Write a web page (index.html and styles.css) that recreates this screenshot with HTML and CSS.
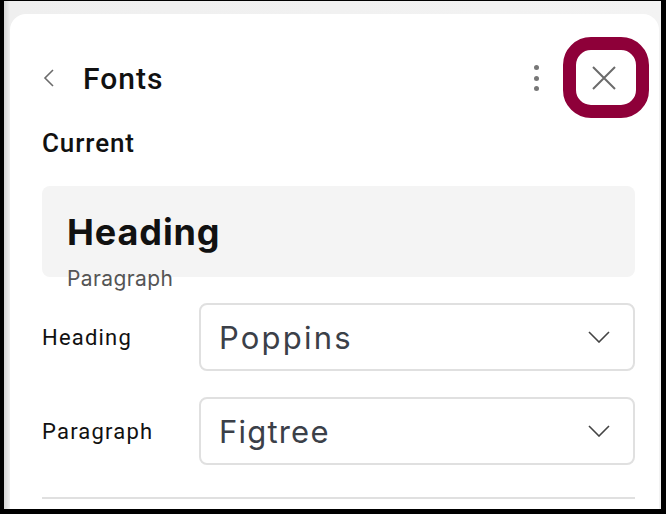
FILE: index.html
```html
<!DOCTYPE html>
<html>
<head>
<meta charset="utf-8">
<link rel="stylesheet" href="styles.css">
</head>
<body>
<div class="frame">
  <div class="panel">
    <div class="header">
      <button class="back" aria-label="Back">
        <svg width="14" height="20" viewBox="0 0 14 20"><path d="M11 2 L3 10 L11 18" fill="none" stroke="#6b6b6b" stroke-width="1.6"/></svg>
      </button>
      <h1 class="title">Fonts</h1>
      <div class="spacer"></div>
      <button class="dots" aria-label="More">
        <span></span><span></span><span></span>
      </button>
      <button class="close" aria-label="Close">
        <svg width="26" height="26" viewBox="0 0 26 26"><path d="M2 2 L24 24 M24 2 L2 24" fill="none" stroke="#6b6b6b" stroke-width="2"/></svg>
        <span class="ring"></span>
      </button>
    </div>
    <h2 class="section">Current</h2>
    <div class="preview">
      <div class="preview-heading">Heading</div>
      <div class="preview-para">Paragraph</div>
    </div>
    <div class="row">
      <label class="row-label">Heading</label>
      <div class="select">
        <span class="select-value">Poppins</span>
        <svg width="22" height="12" viewBox="0 0 22 12"><path d="M1 1 L11 11 L21 1" fill="none" stroke="#444" stroke-width="1.6"/></svg>
      </div>
    </div>
    <div class="row">
      <label class="row-label">Paragraph</label>
      <div class="select">
        <span class="select-value fig">Figtree</span>
        <svg width="22" height="12" viewBox="0 0 22 12"><path d="M1 1 L11 11 L21 1" fill="none" stroke="#444" stroke-width="1.6"/></svg>
      </div>
    </div>
    <div class="divider"></div>
  </div>
</div>
</body>
</html>
```
FILE: styles.css
```css
html, body {
  margin: 0;
  padding: 0;
  background: #000;
  height: 514px;
  overflow: hidden;
}
.frame {
  margin: 1px 5px 0 4px;
  height: 508px;
  background: linear-gradient(to right, #d4d4d4 0px, #efefef 6px, #f3f3f3 100%);
  overflow: hidden;
  padding-top: 13px;
  padding-left: 6px;
  padding-right: 2px;
  box-sizing: border-box;
}
.panel {
  background: #fff;
  border-radius: 16px 16px 0 0;
  height: 495px;
  padding: 40px 24px 0 32px;
  box-sizing: border-box;
  font-family: Roboto, "Liberation Sans", sans-serif;
  color: #111;
}
.header {
  display: flex;
  align-items: center;
  height: 48px;
}
button {
  background: none;
  border: 0;
  padding: 0;
  cursor: pointer;
}
.back {
  width: 14px;
  height: 20px;
  margin-left: 0;
  display: flex;
}
.title {
  margin: 0 0 0 27px;
  font-size: 30px;
  font-weight: 500;
  color: #111;
  letter-spacing: 1px;
}
.spacer { flex: 1; }
.dots {
  width: 24px;
  height: 30px;
  display: flex;
  flex-direction: column;
  align-items: center;
  justify-content: space-between;
  padding: 2px 0;
  box-sizing: border-box;
}
.dots span {
  width: 5px;
  height: 5px;
  border-radius: 50%;
  background: #777;
}
.close {
  position: relative;
  width: 48px;
  height: 48px;
  margin-left: 32px;
  margin-right: 7px;
  display: flex;
  align-items: center;
  justify-content: center;
}
.ring {
  position: absolute;
  left: -17px;
  top: -17px;
  width: 86px;
  height: 81px;
  border: 13px solid #8e0039;
  border-radius: 28px;
  box-sizing: border-box;
}
.section {
  margin: 26px 0 0 0;
  font-size: 26px;
  font-weight: 500;
  color: #111;
  line-height: 30px;
  letter-spacing: 0.9px;
}
.preview {
  margin-top: 28px;
  height: 91px;
  background: #f4f4f4;
  border-radius: 8px;
  padding: 24px 0 0 25px;
  box-sizing: border-box;
}
.preview-heading {
  font-family: Inter, "Noto Sans", sans-serif;
  font-weight: 700;
  font-size: 36px;
  line-height: 44px;
  color: #111;
  letter-spacing: 0.9px;
}
.preview-para {
  font-family: Inter, "Noto Sans", sans-serif;
  font-size: 21px;
  line-height: 26px;
  color: #555;
  margin-top: 12px;
  letter-spacing: 0.4px;
}
.row {
  display: flex;
  align-items: center;
  margin-top: 26px;
}
.row-label {
  width: 157px;
  font-size: 22px;
  color: #111;
  letter-spacing: 1.2px;
}
.select {
  flex: 1;
  height: 68px;
  border: 2px solid #e0e0e0;
  border-radius: 8px;
  box-sizing: border-box;
  display: flex;
  align-items: center;
  justify-content: space-between;
  padding: 0 23px 0 18px;
}
.select-value {
  font-family: Inter, "Noto Sans", sans-serif;
  font-size: 31px;
  color: #3b4048;
  letter-spacing: 2.2px;
}
.select-value.fig {
  letter-spacing: 1.2px;
}
.divider {
  margin-top: 32px;
  height: 2px;
  background: #e0e0e0;
}
```
